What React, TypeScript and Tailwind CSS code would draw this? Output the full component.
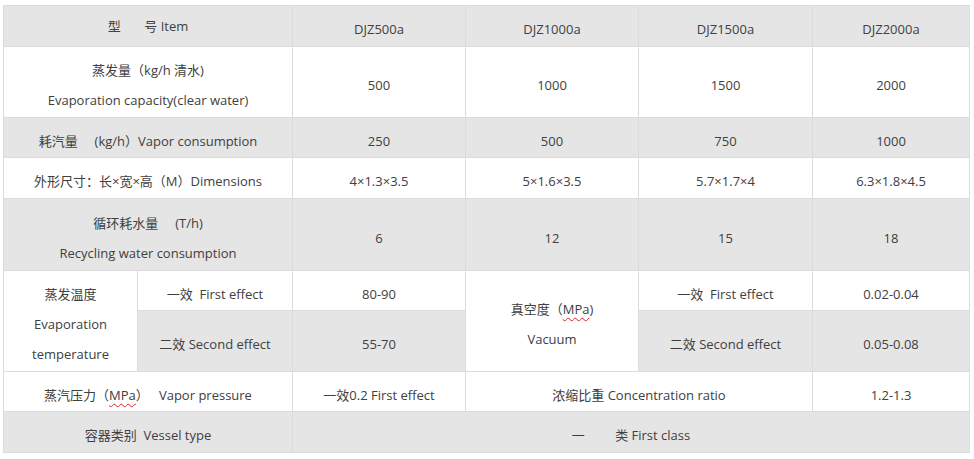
import React from "react";

const font = { fontFamily: '"Open Sans", "Noto Sans CJK SC", sans-serif' };

const G = "bg-[#e5e5e5]";
const W = "bg-white";
const cell = "border border-[#dcdcdc] text-center align-middle p-0 pt-[6px] leading-[30px]";

function Wavy({ children }: { children: React.ReactNode }) {
  return (
    <span className="underline decoration-wavy decoration-[#e02020] decoration-1 underline-offset-[3px]">
      {children}
    </span>
  );
}

export default function App() {
  return (
    <div className="w-[974px] h-[459px] bg-white pt-[5px] pl-[3px]" style={font}>
      <table className="table-fixed border-collapse w-[966px] text-[13px] text-[#404040]">
        <colgroup>
          <col className="w-[134px]" />
          <col className="w-[155px]" />
          <col className="w-[173px]" />
          <col className="w-[173px]" />
          <col className="w-[174px]" />
          <col className="w-[157px]" />
        </colgroup>
        <tbody>
          <tr className="h-[41px]">
            <td colSpan={2} className={`${cell} ${G} !pt-0 !pb-[1px]`}>
              型&nbsp;&nbsp;&nbsp;&nbsp;&nbsp;&nbsp;&nbsp;号 Item
            </td>
            <td className={`${cell} ${G}`}>DJZ500a</td>
            <td className={`${cell} ${G}`}>DJZ1000a</td>
            <td className={`${cell} ${G}`}>DJZ1500a</td>
            <td className={`${cell} ${G}`}>DJZ2000a</td>
          </tr>
          <tr className="h-[71px]">
            <td colSpan={2} className={`${cell} ${W}`}>
              <div>蒸发量（kg/h 清水)</div>
              <div>Evaporation capacity(clear water)</div>
            </td>
            <td className={`${cell} ${W}`}>500</td>
            <td className={`${cell} ${W}`}>1000</td>
            <td className={`${cell} ${W}`}>1500</td>
            <td className={`${cell} ${W}`}>2000</td>
          </tr>
          <tr className="h-[40px]">
            <td colSpan={2} className={`${cell} ${G}`}>
              耗汽量&nbsp;&nbsp;&nbsp;&nbsp;&nbsp;(kg/h）Vapor consumption
            </td>
            <td className={`${cell} ${G}`}>250</td>
            <td className={`${cell} ${G}`}>500</td>
            <td className={`${cell} ${G}`}>750</td>
            <td className={`${cell} ${G}`}>1000</td>
          </tr>
          <tr className="h-[41px]">
            <td colSpan={2} className={`${cell} ${W}`}>
              外形尺寸：长×宽×高（M）Dimensions
            </td>
            <td className={`${cell} ${W}`}>4×1.3×3.5</td>
            <td className={`${cell} ${W}`}>5×1.6×3.5</td>
            <td className={`${cell} ${W}`}>5.7×1.7×4</td>
            <td className={`${cell} ${W}`}>6.3×1.8×4.5</td>
          </tr>
          <tr className="h-[72px]">
            <td colSpan={2} className={`${cell} ${G}`}>
              <div>循环耗水量&nbsp;&nbsp;&nbsp;&nbsp;&nbsp;(T/h)</div>
              <div>Recycling water consumption</div>
            </td>
            <td className={`${cell} ${G}`}>6</td>
            <td className={`${cell} ${G}`}>12</td>
            <td className={`${cell} ${G}`}>15</td>
            <td className={`${cell} ${G}`}>18</td>
          </tr>
          <tr className="h-[40px]">
            <td rowSpan={2} className={`${cell} ${W}`}>
              <div>蒸发温度</div>
              <div>Evaporation</div>
              <div>temperature</div>
            </td>
            <td className={`${cell} ${W}`}>一效&nbsp;&nbsp;First effect</td>
            <td className={`${cell} ${W}`}>80-90</td>
            <td rowSpan={2} className={`${cell} ${W}`}>
              <div>
                真空度（<Wavy>MPa</Wavy>)
              </div>
              <div>Vacuum</div>
            </td>
            <td className={`${cell} ${W}`}>一效&nbsp;&nbsp;First effect</td>
            <td className={`${cell} ${W}`}>0.02-0.04</td>
          </tr>
          <tr className="h-[61px]">
            <td className={`${cell} ${G}`}>二效 Second effect</td>
            <td className={`${cell} ${G}`}>55-70</td>
            <td className={`${cell} ${G}`}>二效 Second effect</td>
            <td className={`${cell} ${G}`}>0.05-0.08</td>
          </tr>
          <tr className="h-[40px]">
            <td colSpan={2} className={`${cell} ${W}`}>
              蒸汽压力（<Wavy>MPa</Wavy>）&nbsp;&nbsp;&nbsp;Vapor pressure
            </td>
            <td className={`${cell} ${W}`}>一效0.2 First effect</td>
            <td colSpan={2} className={`${cell} ${W}`}>浓缩比重 Concentration ratio</td>
            <td className={`${cell} ${W}`}>1.2-1.3</td>
          </tr>
          <tr className="h-[41px]">
            <td colSpan={2} className={`${cell} ${G}`}>容器类别&nbsp;&nbsp;Vessel type</td>
            <td colSpan={4} className={`${cell} ${G}`}>
              一&nbsp;&nbsp;&nbsp;&nbsp;&nbsp;&nbsp;&nbsp;&nbsp;&nbsp;类 First class
            </td>
          </tr>
        </tbody>
      </table>
    </div>
  );
}
